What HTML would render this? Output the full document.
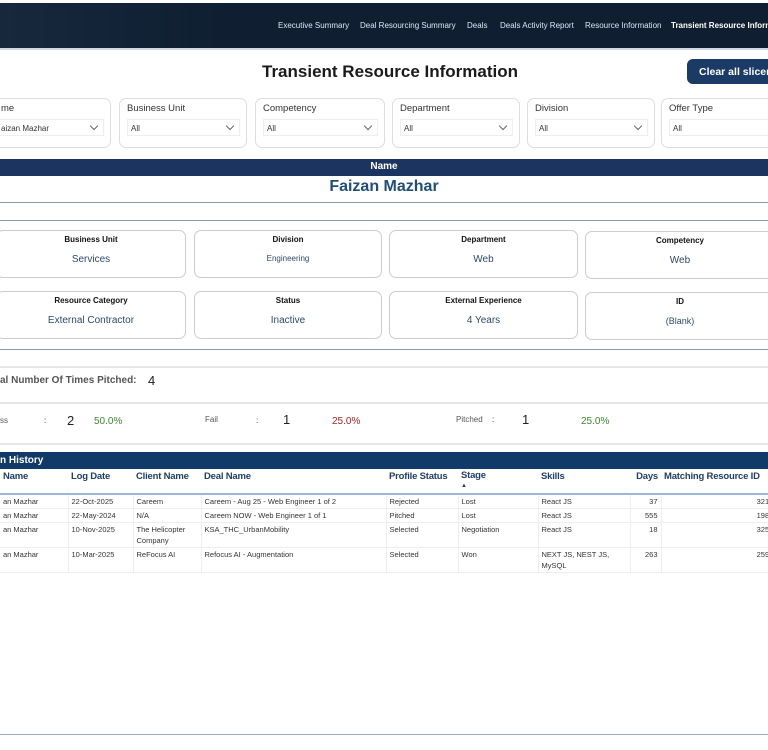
<!DOCTYPE html>
<html><head><meta charset="utf-8"><style>
*{box-sizing:border-box;margin:0;padding:0}
body{width:768px;height:750px;overflow:hidden;background:#fff;font-family:"Liberation Sans",sans-serif;position:relative;color:#222}
.a{position:absolute;white-space:nowrap}
.top{left:0;top:3px;width:768px;height:47px;background:linear-gradient(90deg,#17283d 0,#0f1e31 30%,#0f1e31 100%);border-bottom:2px solid #cfd8e3}
.nav{font-size:8px;color:#dfe6ee;top:21px}
.f{top:98px;height:50px;border:1px solid #ddd;border-radius:7px;background:#fff}
.f .l{position:absolute;left:7px;top:4px;font-size:9.5px;color:#333}
.f .d{position:absolute;left:7px;right:6px;top:20px;height:17px;border:1px solid #eee;font-size:8px;padding:4px 3px;color:#333}
.f .d:after{content:"";position:absolute;right:6px;top:3px;width:5px;height:5px;border-right:1px solid #666;border-bottom:1px solid #666;transform:rotate(45deg)}
.c{height:48px;border:1px solid #ccc;border-radius:7px;text-align:center}
.c b{display:block;font-size:8px;margin-top:4px;color:#111}
.c span{display:block;font-size:10px;margin-top:10px;color:#2d4a6b}
.hl{left:0;width:768px;height:1px;background:#8a9bb0}
.gl{left:0;width:768px;height:2px;background:#e6e6e6}
table{position:absolute;left:-30px;top:469px;border-collapse:collapse;font-size:7.5px;color:#333;table-layout:fixed;width:811px}
th{color:#1f3f66;font-size:9.5px;text-align:left;padding:2px 3px;height:20px;vertical-align:top;white-space:nowrap;letter-spacing:-.2px}
thead tr{border-bottom:2px solid #9cb8d4}
td{padding:1px 3px;vertical-align:top;border-right:1px solid #eee;line-height:11px;white-space:nowrap}
tbody tr{border-bottom:1px solid #eee}
.r{text-align:right}
</style></head><body>
<div class="a top"></div>
<div class="a nav" style="left:278px">Executive Summary</div>
<div class="a nav" style="left:360px">Deal Resourcing Summary</div>
<div class="a nav" style="left:467px">Deals</div>
<div class="a nav" style="left:500px">Deals Activity Report</div>
<div class="a nav" style="left:585px">Resource Information</div>
<div class="a nav" style="left:671px;font-weight:bold;color:#fff">Transient Resource Information</div>
<div class="a" style="left:262px;top:62px;font-size:17px;font-weight:bold;color:#1a1a1a">Transient Resource Information</div>
<div class="a" style="left:687px;top:59px;width:100px;height:25px;background:#1b3a66;border-radius:6px;color:#fff;font-size:10.5px;font-weight:bold;padding:7px 12px">Clear all slicers</div>
<div class="a f" style="left:-8px;width:119px"><div class="l" style="left:8px">me</div><div class="d" style="left:4px">aizan Mazhar</div></div>
<div class="a f" style="left:119px;width:128px"><div class="l">Business Unit</div><div class="d">All</div></div>
<div class="a f" style="left:255px;width:130px"><div class="l">Competency</div><div class="d">All</div></div>
<div class="a f" style="left:392px;width:128px"><div class="l">Department</div><div class="d">All</div></div>
<div class="a f" style="left:527px;width:128px"><div class="l">Division</div><div class="d">All</div></div>
<div class="a f" style="left:661px;width:120px"><div class="l">Offer Type</div><div class="d" style="right:-10px">All</div></div>
<div class="a" style="left:0;top:159px;width:768px;height:17px;background:#1b3560;color:#fff;font-size:10px;font-weight:bold;text-align:center;padding-top:2px">Name</div>
<div class="a" style="left:0;top:178px;width:768px;text-align:center;font-size:16px;font-weight:bold;color:#1f4e79">Faizan Mazhar</div>
<div class="a hl" style="top:202px"></div>
<div class="a hl" style="top:220px"></div>
<div class="a c" style="left:-4px;top:230px;width:190px"><b>Business Unit</b><span>Services</span></div>
<div class="a c" style="left:194px;top:230px;width:188px"><b>Division</b><span style="font-size:8px">Engineering</span></div>
<div class="a c" style="left:389px;top:230px;width:189px"><b>Department</b><span>Web</span></div>
<div class="a c" style="left:585px;top:231px;width:190px"><b>Competency</b><span>Web</span></div>
<div class="a c" style="left:-4px;top:291px;width:190px"><b>Resource Category</b><span>External Contractor</span></div>
<div class="a c" style="left:194px;top:291px;width:188px"><b>Status</b><span>Inactive</span></div>
<div class="a c" style="left:389px;top:291px;width:189px"><b>External Experience</b><span>4 Years</span></div>
<div class="a c" style="left:585px;top:292px;width:190px"><b>ID</b><span style="font-size:9px">(Blank)</span></div>
<div class="a hl" style="top:349px"></div>
<div class="a gl" style="top:366px"></div>
<div class="a" style="left:0;top:375px;font-size:10px;font-weight:bold;color:#555">al Number Of Times Pitched:</div>
<div class="a" style="left:148px;top:373px;font-size:13px">4</div>
<div class="a gl" style="top:402px"></div>
<div class="a" style="left:0;top:416px;font-size:8px;color:#555">ss</div>
<div class="a" style="left:44px;top:416px;font-size:8px">:</div>
<div class="a" style="left:67px;top:413px;font-size:13px">2</div>
<div class="a" style="left:94px;top:416px;font-size:10px;color:#3a8a2a">50.0%</div>
<div class="a" style="left:205px;top:415px;font-size:8px;color:#555">Fail</div>
<div class="a" style="left:256px;top:416px;font-size:8px">:</div>
<div class="a" style="left:283px;top:412px;font-size:13px">1</div>
<div class="a" style="left:332px;top:416px;font-size:10px;color:#b02020">25.0%</div>
<div class="a" style="left:456px;top:415px;font-size:8px;color:#555">Pitched</div>
<div class="a" style="left:492px;top:415px;font-size:8px">:</div>
<div class="a" style="left:522px;top:412px;font-size:13px">1</div>
<div class="a" style="left:581px;top:416px;font-size:10px;color:#3a8a2a">25.0%</div>
<div class="a gl" style="top:443px"></div>
<div class="a" style="left:0;top:452px;width:768px;height:17px;background:#123a68;color:#fff;font-size:10px;font-weight:bold;padding:3px 0 0 0">n History</div>
<table>
<colgroup><col style="width:98px"><col style="width:65px"><col style="width:68px"><col style="width:185px"><col style="width:72px"><col style="width:80px"><col style="width:92px"><col style="width:31px"><col style="width:120px"></colgroup>
<thead><tr><th style="padding-left:33px">Name</th><th>Log Date</th><th>Client Name</th><th>Deal Name</th><th>Profile Status</th><th style="line-height:9px">Stage<br><span style="font-size:6px">▲</span></th><th>Skills</th><th class="r">Days</th><th>Matching Resource ID</th></tr></thead>
<tbody>
<tr><td style="padding-left:33px">an Mazhar</td><td>22-Oct-2025</td><td>Careem</td><td>Careem - Aug 25 - Web Engineer 1 of 2</td><td>Rejected</td><td>Lost</td><td>React JS</td><td class="r">37</td><td class="r">32145</td></tr>
<tr><td style="padding-left:33px">an Mazhar</td><td>22-May-2024</td><td>N/A</td><td>Careem NOW - Web Engineer 1 of 1</td><td>Pitched</td><td>Lost</td><td>React JS</td><td class="r">555</td><td class="r">19823</td></tr>
<tr><td style="padding-left:33px">an Mazhar</td><td>10-Nov-2025</td><td>The Helicopter<br>Company</td><td>KSA_THC_UrbanMobility</td><td>Selected</td><td>Negotiation</td><td>React JS</td><td class="r">18</td><td class="r">32538</td></tr>
<tr><td style="padding-left:33px">an Mazhar</td><td>10-Mar-2025</td><td>ReFocus AI</td><td>Refocus AI - Augmentation</td><td>Selected</td><td>Won</td><td>NEXT JS, NEST JS,<br>MySQL</td><td class="r">263</td><td class="r">25991</td></tr>
</tbody></table>
<div class="a" style="left:0;top:734px;width:768px;height:1px;background:#9aaabb"></div>
</body></html>
